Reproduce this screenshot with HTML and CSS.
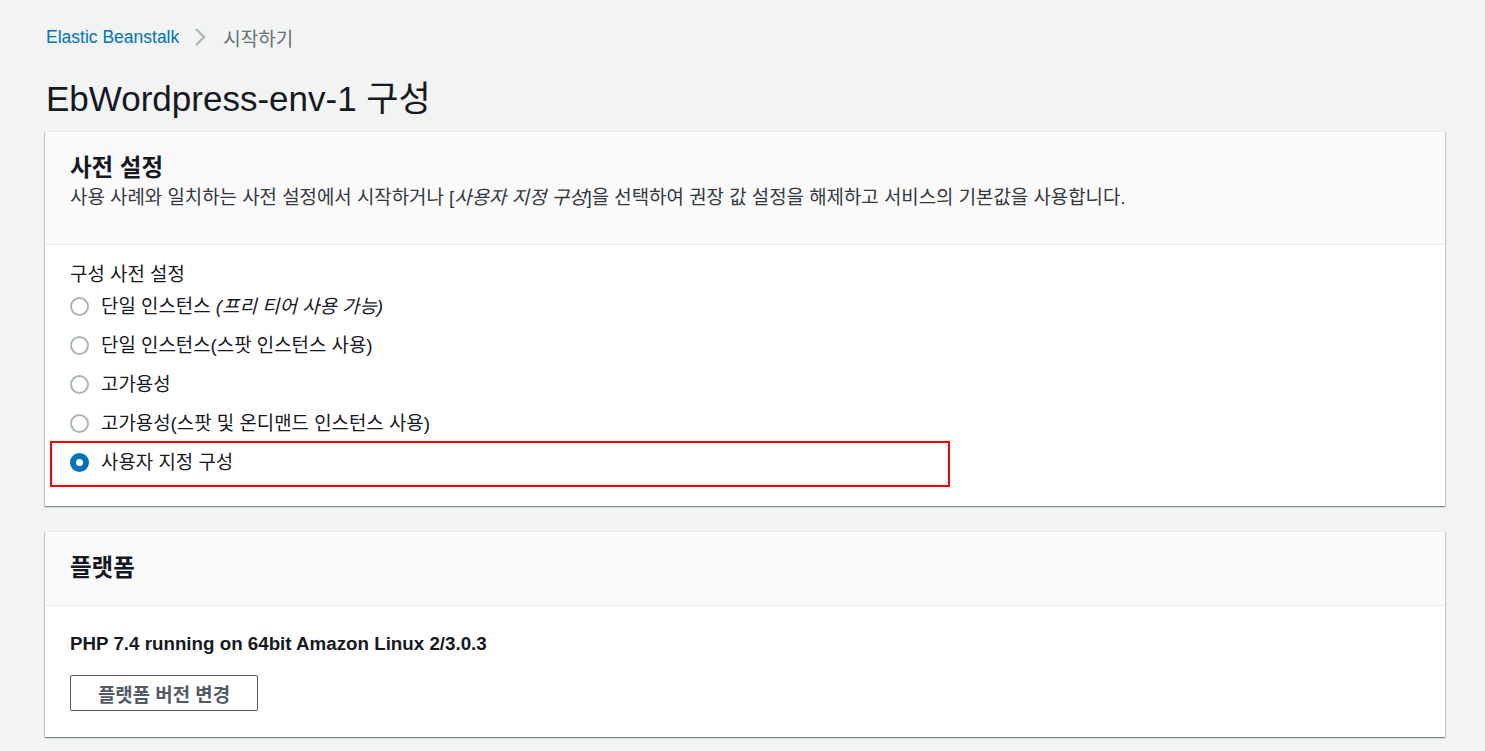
FILE: index.html
```html
<!DOCTYPE html>
<html lang="ko">
<head>
<meta charset="utf-8">
<title>EbWordpress-env-1 구성</title>
<link rel="stylesheet" href="styles.css">
</head>
<body>
<div class="page">
  <nav class="breadcrumb">
    <a class="crumb-link" href="#">Elastic Beanstalk</a>
    <svg class="crumb-sep" width="14" height="20" viewBox="0 0 14 20"><path d="M3 2 L11 10 L3 18" fill="none" stroke="#aab7b8" stroke-width="2.4"/></svg>
    <span class="crumb-current ko">시작하기</span>
  </nav>
  <h1 class="page-title">EbWordpress-env-1 구성</h1>

  <section class="card">
    <header class="card-header card-header-tall">
      <h2 class="card-title">사전 설정</h2>
      <p class="card-desc ko">사용 사례와 일치하는 사전 설정에서 시작하거나 [<i>사용자 지정 구성</i>]을 선택하여 권장 값 설정을 해제하고 서비스의 기본값을 사용합니다.</p>
    </header>
    <div class="card-body presets">
      <div class="field-label ko">구성 사전 설정</div>
      <label class="radio-row"><span class="radio"></span><span class="radio-text ko">단일 인스턴스 <i>(프리 티어 사용 가능)</i></span></label>
      <label class="radio-row"><span class="radio"></span><span class="radio-text ko">단일 인스턴스(스팟 인스턴스 사용)</span></label>
      <label class="radio-row"><span class="radio"></span><span class="radio-text ko">고가용성</span></label>
      <label class="radio-row"><span class="radio"></span><span class="radio-text ko">고가용성(스팟 및 온디맨드 인스턴스 사용)</span></label>
      <label class="radio-row selected"><span class="radio checked"></span><span class="radio-text ko">사용자 지정 구성</span><span class="highlight"></span></label>
    </div>
  </section>

  <section class="card">
    <header class="card-header">
      <h2 class="card-title">플랫폼</h2>
    </header>
    <div class="card-body platform">
      <div class="platform-name">PHP 7.4 running on 64bit Amazon Linux 2/3.0.3</div>
      <button class="btn ko">플랫폼 버전 변경</button>
    </div>
  </section>
</div>
</body>
</html>
```
FILE: styles.css
```css
* { box-sizing: border-box; }
html, body { margin: 0; padding: 0; }
body {
  background: #f2f3f3;
  font-family: "Liberation Sans", "Noto Sans CJK KR", Arial, sans-serif;
  color: #16191f;
  font-size: 17.5px;
}
.ko { font-size: 18.9px; }
.page {
  padding: 24px 40px 0 45px;
  width: 1485px;
}
.breadcrumb {
  display: flex;
  align-items: center;
  height: 26px;
  padding-left: 1px;
  font-size: 17.5px;
}
.crumb-link { color: #0073bb; text-decoration: none; }
.crumb-sep { margin: 0 16px 0 14px; }
.crumb-current { color: #687078; font-size: 19px; }
.page-title {
  margin: 26px 0 10px 1px;
  font-size: 35px;
  line-height: 45px;
  font-weight: 400;
  color: #16191f;
}
.card {
  width: 1400px;
  background: #fff;
  border-top: 1px solid #eaeded;
  box-shadow: 0 1px 1px 0 rgba(0,28,36,.3), 1px 1px 1px 0 rgba(0,28,36,.15), -1px 1px 1px 0 rgba(0,28,36,.15);
  margin-bottom: 25px;
}
.card-header {
  background: #fafafa;
  border-bottom: 1px solid #eaeded;
  padding: 21px 25px 22px;
}
.card-header-tall { padding-bottom: 34px; }
.card-title {
  margin: 0;
  font-size: 23.5px;
  line-height: 30px;
  font-weight: 700;
}
.card-desc {
  margin: 2px 0 0;
  line-height: 25px;
  color: #33383f;
}
.card-body { padding: 17px 25px 24px; }
.field-label { line-height: 25px; color: #16191f; }
.radio-row {
  position: relative;
  display: flex;
  align-items: center;
  height: 39px;
  cursor: pointer;
}
.radio {
  width: 19px;
  height: 19px;
  border: 2px solid #aab7b8;
  border-radius: 50%;
  margin-right: 12px;
  flex: none;
}
.radio.checked {
  border: 6px solid #0073bb;
  background: #fff;
}
.radio-text { line-height: 25px; }
.radio-text i { font-style: italic; }
.highlight {
  position: absolute;
  left: -20px;
  top: -2px;
  width: 900px;
  height: 46px;
  border: 2px solid #ff0000;
  pointer-events: none;
}
.card-body.platform { padding: 25px 25px 26px; }
.platform-name {
  font-weight: 700;
  font-size: 18.75px;
  line-height: 25px;
}
.btn {
  margin-top: 19px;
  width: 188px;
  height: 36px;
  border: 1px solid #545b64;
  border-radius: 2px;
  background: #fff;
  color: #545b64;
  font-family: "Liberation Sans", "Noto Sans CJK KR", Arial, sans-serif;
  font-weight: 700;
  padding: 0;
}
```
